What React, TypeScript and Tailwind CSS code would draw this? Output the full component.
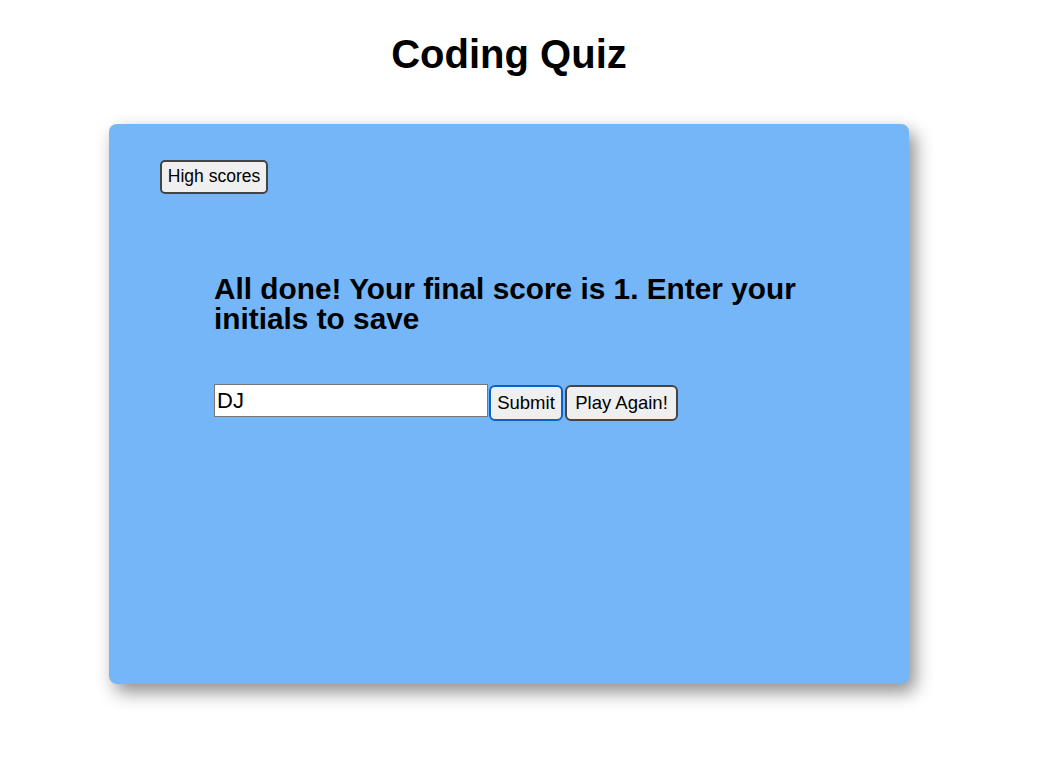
import React from "react";

export default function App() {
  return (
    <div className="min-h-[773px] bg-white" style={{ fontFamily: '"Liberation Sans", Arial, sans-serif' }}>
      <div className="ml-[109px] w-[800px]">
        <h1 className="pt-[31px] text-center text-[40px] font-bold leading-[46px] text-black">Coding Quiz</h1>
        <div className="mt-[47px] h-[560px] rounded-[8px] bg-[#74b6f7] pl-[51px] pr-[50px] pt-[36px] shadow-[6px_8px_18px_rgba(0,0,0,0.45)]">
          <button className="h-[34px] w-[108px] rounded-[5px] border-2 border-[#444] bg-[#efefef] text-[17.5px] leading-none text-black">
            High scores
          </button>
          <div className="ml-[54px] mr-[54px] mt-[80px]">
            <h2 className="text-[29.8px] font-bold leading-[30px] text-black">
              All done! Your final score is 1. Enter your initials to save
            </h2>
            <div className="mt-[50px] flex items-start">
              <input
                defaultValue="DJ"
                className="h-[33px] w-[274px] border border-[#767676] bg-white px-[2px] text-[22px] text-black outline-none"
              />
              <button className="ml-[1px] mt-[1px] h-[36px] w-[74px] rounded-[6px] border-2 border-[#0b63c9] bg-[#efefef] text-[18.5px] leading-none text-black">
                Submit
              </button>
              <button className="ml-[2px] mt-[1px] h-[36px] w-[113px] rounded-[6px] border-2 border-[#444] bg-[#efefef] text-[18.5px] leading-none text-black">
                Play Again!
              </button>
            </div>
          </div>
        </div>
      </div>
    </div>
  );
}
